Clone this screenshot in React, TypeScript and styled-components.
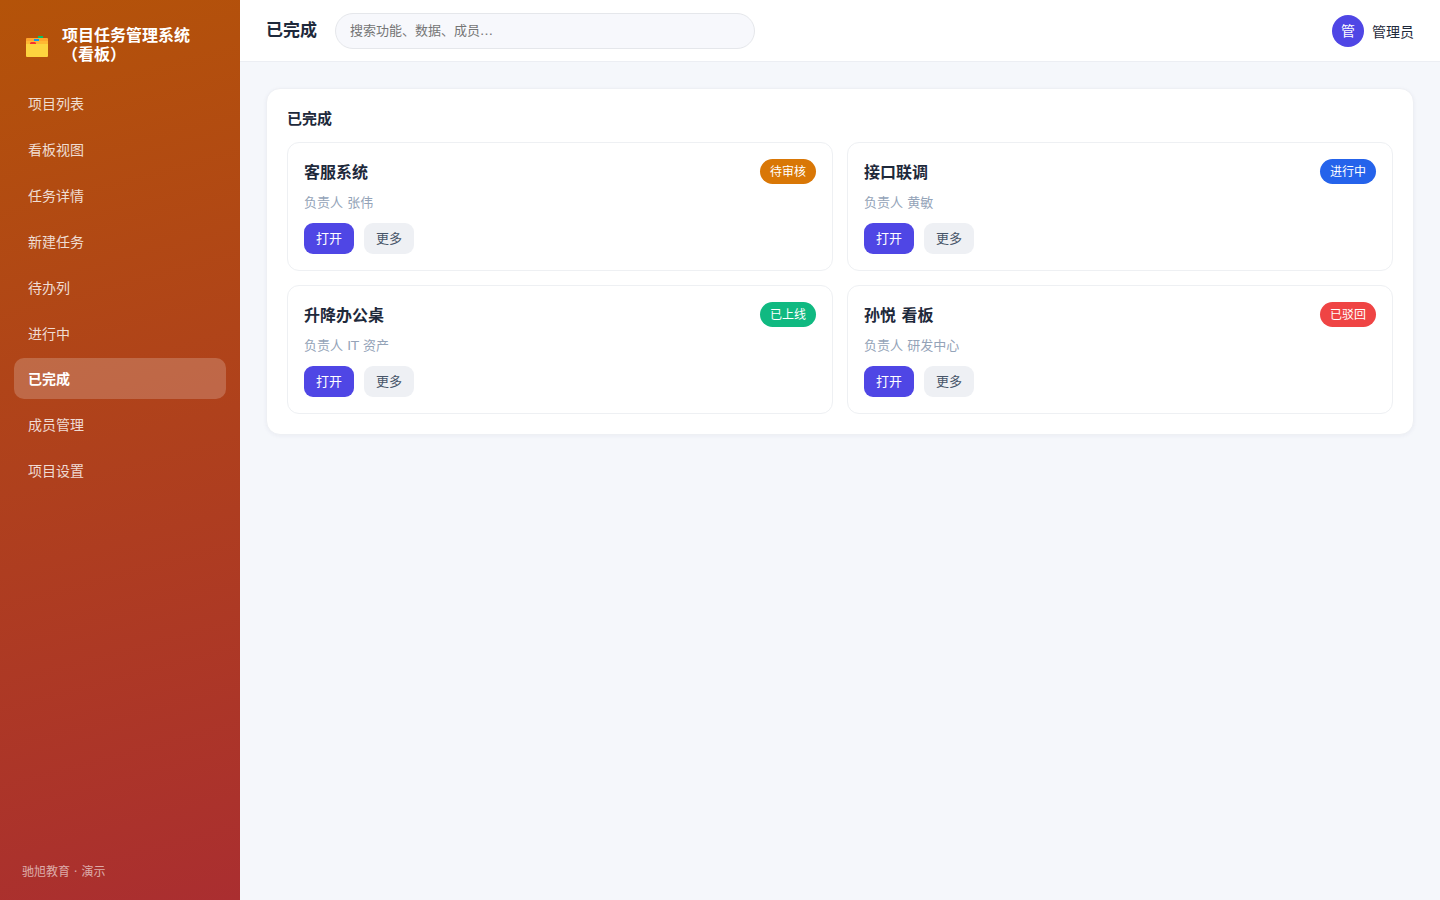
import React from "react";
import styled, { createGlobalStyle } from "styled-components";

const GlobalStyle = createGlobalStyle`
  *, *::before, *::after { box-sizing: border-box; }
  body {
    margin: 0;
    background: #f5f7fb;
    color: #1e293b;
    font-family: "DejaVu Sans", "Noto Sans CJK SC", sans-serif;
    font-size: 14px;
  }
  h1, h2, h3, p { margin: 0; }
  button, input { font-family: inherit; }
`;

const Shell = styled.div`
  display: flex;
  min-height: 100vh;
`;

const Sidebar = styled.aside`
  display: flex;
  flex-direction: column;
  flex: 0 0 240px;
  padding: 26px 14px 18px;
  background: linear-gradient(165deg, #b45309, #aa2e30);
  color: #fff;
`;

const Brand = styled.div`
  display: flex;
  align-items: center;
  gap: 12px;
  padding: 0 8px 18px;
  font-size: 16px;
  font-weight: 700;
  line-height: 19px;
`;

const BrandIcon = styled.svg`
  flex: none;
  width: 28px;
  height: 28px;
`;

const BrandName = styled.div``;

const Nav = styled.nav`
  display: flex;
  flex-direction: column;
  gap: 4px;
`;

const NavLink = styled.a<{ $active: boolean }>`
  padding: 11px 14px 9px;
  border-radius: 10px;
  line-height: ${(p) => (p.$active ? "21px" : "22px")};
  font-weight: ${(p) => (p.$active ? 700 : 400)};
  color: ${(p) => (p.$active ? "#fff" : "rgba(255, 255, 255, 0.82)")};
  background: ${(p) => (p.$active ? "rgba(255, 255, 255, 0.2)" : "transparent")};
  text-decoration: none;
`;

const SidebarFooter = styled.p`
  margin-top: auto;
  padding: 0 8px;
  font-size: 12px;
  line-height: 20px;
  color: rgba(255, 255, 255, 0.6);
`;

const Main = styled.div`
  flex: 1;
  min-width: 0;
`;

const Header = styled.header`
  display: flex;
  align-items: center;
  gap: 18px;
  height: 62px;
  padding: 0 26px;
  background: #fff;
  border-bottom: 1px solid #eceef3;
`;

const PageTitle = styled.h1`
  font-size: 17px;
  line-height: 25px;
`;

const Search = styled.input`
  width: 420px;
  height: 36px;
  padding: 0 14px;
  border: 1px solid #e5e7eb;
  border-radius: 18px;
  background: #f7f8fc;
  color: inherit;
  font-size: 13px;
  &::placeholder { color: #757575; }
`;

const User = styled.div`
  display: flex;
  align-items: center;
  gap: 8px;
  margin-left: auto;
`;

const Avatar = styled.span`
  width: 32px;
  height: 32px;
  border-radius: 50%;
  background: #4f46e5;
  color: #fff;
  line-height: 32px;
  text-align: center;
`;

const Content = styled.main`
  padding: 26px;
`;

const Panel = styled.section`
  padding: 20px;
  border: 1px solid #eef0f4;
  border-radius: 14px;
  background: #fff;
  box-shadow: 0 1px 4px rgba(30, 41, 99, 0.05);
`;

const PanelTitle = styled.h2`
  margin-bottom: 12px;
  font-size: 15px;
  line-height: 21px;
`;

const Grid = styled.div`
  display: grid;
  grid-template-columns: repeat(2, 1fr);
  gap: 14px;
`;

const Card = styled.article`
  padding: 16px;
  border: 1px solid #eef0f3;
  border-radius: 12px;
`;

const CardHead = styled.div`
  display: flex;
  align-items: flex-start;
  justify-content: space-between;
`;

const CardTitle = styled.h3`
  font-size: 16px;
  line-height: 27px;
`;

const Badge = styled.span<{ $color: string }>`
  padding: 1px 10px 0;
  border-radius: 13px;
  background: ${(p) => p.$color};
  color: #fff;
  font-size: 12px;
  line-height: 24px;
`;

const Owner = styled.p`
  margin: 7px 0 10px;
  font-size: 13px;
  line-height: 20px;
  color: #94a3b8;
`;

const Actions = styled.div`
  display: flex;
  gap: 10px;
`;

const Button = styled.button<{ $primary?: boolean }>`
  padding: 0 12px;
  border: 0;
  border-radius: 9px;
  background: ${(p) => (p.$primary ? "#4f46e5" : "#eef0f4")};
  color: ${(p) => (p.$primary ? "#fff" : "#475569")};
  font-size: 13px;
  line-height: 31px;
  cursor: pointer;
`;

const navItems = [
  "项目列表",
  "看板视图",
  "任务详情",
  "新建任务",
  "待办列",
  "进行中",
  "已完成",
  "成员管理",
  "项目设置",
];

const cards = [
  { title: "客服系统", owner: "张伟", status: "待审核", color: "#d97706" },
  { title: "接口联调", owner: "黄敏", status: "进行中", color: "#2563eb" },
  { title: "升降办公桌", owner: "IT 资产", status: "已上线", color: "#10b981" },
  { title: "孙悦 看板", owner: "研发中心", status: "已驳回", color: "#ef4444" },
];

function FolderIcon() {
  return (
    <BrandIcon viewBox="0 0 28 28" aria-hidden="true">
      <path d="M5 7h20a1 1 0 0 1 1 1v8H4V8a1 1 0 0 1 1-1z" fill="#ffa52b" />
      <rect x="16" y="5" width="5" height="2" fill="#00c468" />
      <path d="M4 10h22v7H4z" fill="#ffb833" />
      <rect x="12" y="8" width="5" height="2" fill="#0f9bea" />
      <path d="M4 13h22v12a1 1 0 0 1-1 1H5a1 1 0 0 1-1-1z" fill="#fdd43f" />
      <path d="M9 11h4l1 1v1H8v-1z" fill="#f8312f" />
    </BrandIcon>
  );
}

export default function App() {
  return (
    <>
      <GlobalStyle />
      <Shell>
        <Sidebar>
          <Brand>
            <FolderIcon />
            <BrandName>项目任务管理系统（看板）</BrandName>
          </Brand>
          <Nav>
            {navItems.map((item) => (
              <NavLink
                key={item}
                href="#"
                $active={item === "已完成"}
                aria-current={item === "已完成" ? "page" : undefined}
              >
                {item}
              </NavLink>
            ))}
          </Nav>
          <SidebarFooter>驰旭教育 · 演示</SidebarFooter>
        </Sidebar>
        <Main>
          <Header>
            <PageTitle>已完成</PageTitle>
            <Search type="search" aria-label="搜索" placeholder="搜索功能、数据、成员…" />
            <User>
              <Avatar>管</Avatar>
              <span>管理员</span>
            </User>
          </Header>
          <Content>
            <Panel>
              <PanelTitle>已完成</PanelTitle>
              <Grid>
                {cards.map((card) => (
                  <Card key={card.title}>
                    <CardHead>
                      <CardTitle>{card.title}</CardTitle>
                      <Badge $color={card.color}>{card.status}</Badge>
                    </CardHead>
                    <Owner>负责人 {card.owner}</Owner>
                    <Actions>
                      <Button type="button" $primary>打开</Button>
                      <Button type="button">更多</Button>
                    </Actions>
                  </Card>
                ))}
              </Grid>
            </Panel>
          </Content>
        </Main>
      </Shell>
    </>
  );
}
